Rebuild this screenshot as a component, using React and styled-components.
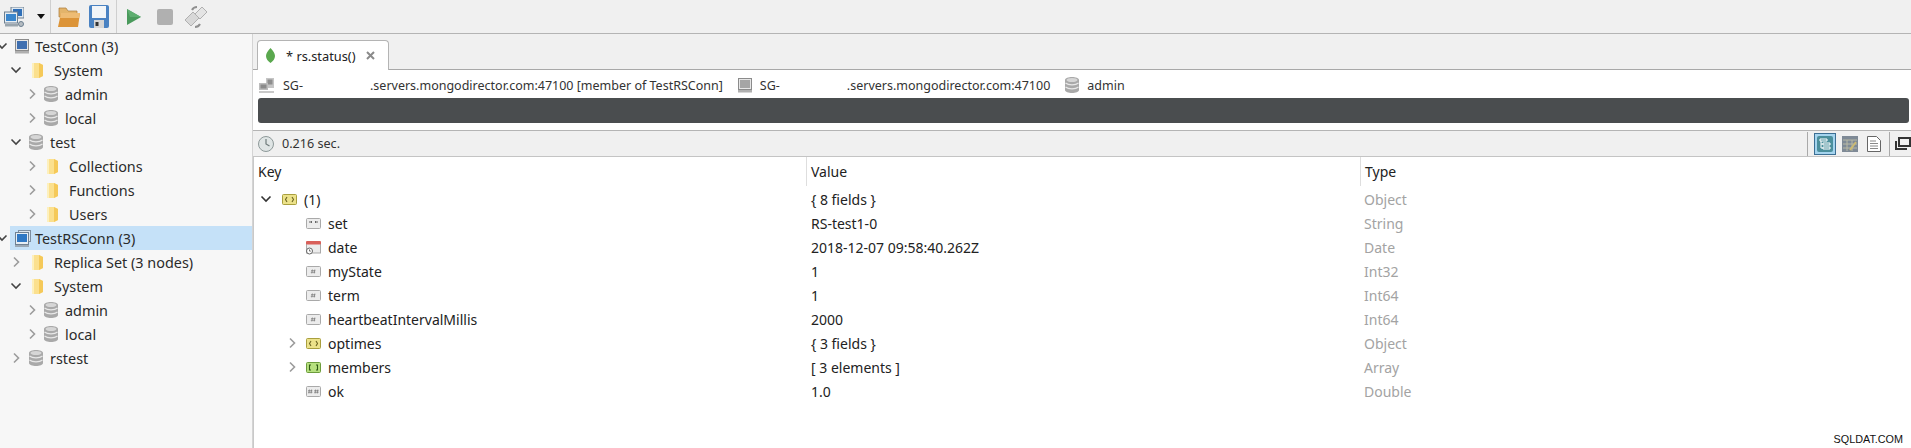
import React from "react";
import styled, { createGlobalStyle } from "styled-components";

const GlobalStyle = createGlobalStyle`
  html, body { margin: 0; padding: 0; background: #fff; }
  body { font-family: "Noto Sans", "Open Sans", sans-serif; color: #222; overflow: hidden; }
`;

const Page = styled.div`
  position: relative;
  width: 1911px;
  height: 448px;
  display: flex;
  flex-direction: column;
  overflow: hidden;
`;

const Toolbar = styled.div`
  height: 33px;
  flex: none;
  display: flex;
  align-items: center;
  background: #f0f0f0;
  border-bottom: 1px solid #b4b4b4;
`;

const ToolIcon = styled.svg`
  flex: none;
  display: block;
  margin-left: ${(p) => p.$left}px;
`;

const ToolSep = styled.div`
  flex: none;
  width: 1px;
  height: 33px;
  background: #cfcfcf;
  margin-left: ${(p) => p.$left}px;
`;

const Body = styled.div`
  flex: 1;
  display: flex;
  min-height: 0;
`;

const Sidebar = styled.div`
  width: 252px;
  flex: none;
  background: #f7f7f7;
  border-right: 1px solid #d4d4d4;
  overflow: hidden;
`;

const TreeRow = styled.div`
  height: 24px;
  display: flex;
  align-items: center;
  padding-left: ${(p) => p.$left}px;
  font-size: 14.4px;
  color: #2b2b2b;
  white-space: nowrap;
  background: ${(p) => (p.$selected ? "linear-gradient(90deg, transparent 10px, #c5e1f8 10px)" : "none")};
`;

const Arrow = styled.svg`
  flex: none;
  width: 12px;
  height: 12px;
  margin-left: ${(p) => p.$offset || 0}px;
  margin-right: ${(p) => p.$gap}px;
`;

const NodeIcon = styled.span`
  flex: none;
  box-sizing: border-box;
  display: flex;
  align-items: center;
  width: ${(p) => p.$width}px;
  padding-left: ${(p) => p.$pad || 0}px;
`;

const Main = styled.div`
  flex: 1;
  min-width: 0;
  display: flex;
  flex-direction: column;
`;

const TabBar = styled.div`
  height: 35px;
  flex: none;
  background: #f0f0f0;
  border-bottom: 1px solid #a8a8a8;
  display: flex;
  align-items: flex-end;
  padding-left: 4px;
`;

const Tab = styled.div`
  width: 132px;
  height: 30px;
  box-sizing: border-box;
  margin-bottom: -1px;
  background: #fff;
  border: 1px solid #b4b4b4;
  border-bottom: none;
  border-radius: 4px 4px 0 0;
  display: flex;
  align-items: center;
  padding-left: 8px;
  font-size: 12.8px;
  color: #222;
`;

const TabTitle = styled.span`
  margin-left: 11px;
`;

const TabClose = styled.svg`
  margin-left: 10px;
`;

const InfoBar = styled.div`
  height: 28px;
  flex: none;
  box-sizing: border-box;
  padding: 2px 0 0 6px;
  display: flex;
  align-items: center;
  font-size: 12.5px;
  color: #333;
  white-space: nowrap;
`;

const InfoItem = styled.span`
  display: flex;
  align-items: center;
  margin-left: ${(p) => p.$left || 0}px;
`;

const InfoText = styled.span`
  margin-left: ${(p) => p.$left}px;
`;

const QueryBar = styled.div`
  height: 25px;
  flex: none;
  margin: 0 2px 0 5px;
  background: #4a4d4f;
  border-radius: 3px;
`;

const StatusBar = styled.div`
  height: 25px;
  flex: none;
  margin-top: 7px;
  display: flex;
  align-items: center;
  padding-left: 5px;
  background: #f0f0f0;
  border-top: 1px solid #b4b4b4;
  border-bottom: 1px solid #c4c4c4;
  font-size: 12.6px;
  color: #333;
`;

const StatusTime = styled.span`
  margin-left: 8px;
  flex: 1;
`;

const ViewSep = styled.div`
  width: 1px;
  height: 24px;
  background: #a9a9a9;
`;

const ViewButton = styled.div`
  width: 20px;
  height: 20px;
  margin: 0 6px;
  background: #a5d4ee;
  border: 1px solid #3c6f94;
  display: flex;
  align-items: center;
  justify-content: center;
`;

const ViewIcon = styled.svg`
  display: block;
  margin-right: ${(p) => p.$right || 0}px;
  margin-left: ${(p) => p.$left || 0}px;
`;

const Table = styled.div`
  flex: 1;
  background: #fff;
  border-left: 1px solid #c9c9c9;
  font-size: 14px;
`;

const HeaderRow = styled.div`
  height: 30px;
  display: grid;
  grid-template-columns: 552px 554px 1fr;
  color: #222;
`;

const HeaderCell = styled.div`
  height: 29px;
  display: flex;
  align-items: center;
  padding-left: 4px;
  border-left: ${(p) => (p.$first ? "none" : "1px solid #dedede")};
`;

const DataRow = styled.div`
  height: 24px;
  display: grid;
  grid-template-columns: 552px 554px 1fr;
  align-items: center;
`;

const KeyCell = styled.div`
  display: flex;
  align-items: center;
  padding-left: ${(p) => p.$left}px;
`;

const KeyIcon = styled.svg`
  flex: none;
  margin-right: ${(p) => p.$gap}px;
`;

const ValueCell = styled.div`
  padding-left: 5px;
  color: #222;
`;

const TypeCell = styled.div`
  padding-left: 4px;
  color: #a3a3a3;
`;

const Watermark = styled.div`
  position: absolute;
  right: 8px;
  bottom: 3px;
  font-family: "Liberation Sans", sans-serif;
  font-size: 10.8px;
  color: #111;
`;

const Chevron = ({ open, dark, gap, offset }) => (
  <Arrow viewBox="0 0 12 12" $gap={gap} $offset={offset}>
    {open ? (
      <path d="M1.5 3.5l4.5 4.5 4.5-4.5" fill="none" stroke={dark ? "#333" : "#444"} strokeWidth="1.6" />
    ) : (
      <path d="M4 1.5l4.5 4.5-4.5 4.5" fill="none" stroke="#9c9c9c" strokeWidth="1.6" />
    )}
  </Arrow>
);

const Folder = () => (
  <svg width="13" height="17" viewBox="0 0 13 17">
    <path d="M1 1h7l4 2v11l-4 2H1z" fill="#fbe08e" />
    <path d="M8 1l4 2v11l-4 2z" fill="#f5c959" />
    <path d="M1 1h2v15H1z" fill="#fdf0bd" />
  </svg>
);

const Db = ({ size = 14 }) => (
  <svg width={size} height={size + 2} viewBox="0 0 14 16">
    <path d="M0 3c0-4 14-4 14 0v10c0 4-14 4-14 0z" fill="#a9a9a9" />
    <ellipse cx="7" cy="3" rx="5.5" ry="2" fill="#d6d6d6" />
    <path d="M0.5 6c3 2.6 10 2.6 13 0M0.5 10c3 2.6 10 2.6 13 0" fill="none" stroke="#e8e8e8" strokeWidth="1.2" />
  </svg>
);

const Server = ({ color = "#3f6fb0" }) => (
  <svg width="14" height="15" viewBox="0 0 14 15">
    <rect x="0.5" y="0.5" width="13" height="11" fill="#e6e6e6" stroke="#8b8b8b" />
    <rect x="2" y="2" width="10" height="8" fill={color} />
    <rect x="0" y="12" width="14" height="2.5" fill="#b0b0b0" />
  </svg>
);

const ReplicaServer = () => (
  <svg width="16" height="17" viewBox="0 0 16 17">
    <rect x="3.5" y="0.5" width="12" height="11" fill="#dbe6f0" stroke="#7d8ea0" />
    <rect x="0.5" y="2.5" width="13" height="12" fill="#e6eef5" stroke="#6f8193" />
    <rect x="2" y="4" width="10" height="8" fill="#2f78c4" />
    <rect x="0" y="15" width="14" height="2" fill="#9aa8b5" />
  </svg>
);

const InfoServers = () => (
  <svg width="15" height="15" viewBox="0 0 15 15">
    <rect x="7" y="0" width="8" height="10" fill="#c5c5c5" />
    <rect x="8.5" y="1.5" width="5" height="5" fill="#8e8e8e" />
    <rect x="0" y="5" width="9" height="7" fill="#bcbcbc" />
    <rect x="1.5" y="6.5" width="6" height="4" fill="#8a8a8a" />
    <rect x="0" y="13" width="15" height="2" fill="#c9c9c9" />
  </svg>
);

const KIND_COLORS = {
  string: ["#ececec", "#a9a9a9"],
  number: ["#ececec", "#a9a9a9"],
  object: ["#ece28a", "#a99f3e"],
  array: ["#b6e07f", "#6c9c3c"],
};

const TypeIcon = ({ kind, gap }) => {
  if (kind === "date") {
    return (
      <KeyIcon width="15" height="15" viewBox="0 0 15 15" $gap={gap}>
        <rect x="0.5" y="3" width="14" height="10" fill="#ececec" stroke="#a9a9a9" />
        <rect x="0" y="1" width="15" height="3.5" rx="1" fill="#d9605a" />
        <circle cx="3.5" cy="11" r="3" fill="#fff" stroke="#666" />
        <path d="M3.5 9.4v1.7h1.4" fill="none" stroke="#555" strokeWidth="0.8" />
      </KeyIcon>
    );
  }
  const base = kind === "double" ? "number" : kind;
  const [fill, line] = KIND_COLORS[base];
  return (
    <KeyIcon width="15" height="11" viewBox="0 0 15 11" $gap={gap}>
      <rect x="0.5" y="0.5" width="14" height="10" rx="1" fill={fill} stroke={line} />
      {kind === "string" && <path d="M4 3v2M5.5 3v2M9.5 3v2M11 3v2" stroke="#666" />}
      {kind === "number" && <path d="M6.4 3.5l-.6 4M8.8 3.5l-.6 4M5 4.7h4.4M4.8 6.3h4.4" stroke="#777" strokeWidth="0.7" />}
      {kind === "double" && (
        <path d="M3.4 3.5l-.5 4M5.6 3.5l-.5 4M2 4.7h4.4M2 6.3h4.4M9.6 3.5l-.5 4M11.8 3.5l-.5 4M8.2 4.7h4.4M8.2 6.3h4.4" stroke="#777" strokeWidth="0.7" />
      )}
      {kind === "object" && <path d="M5 3L3.5 5.5 5 8M10 3l1.5 2.5L10 8" fill="none" stroke="#6b6320" strokeWidth="1.1" />}
      {kind === "array" && <path d="M5 3H3.5v5H5M10 3h1.5v5H10" fill="none" stroke="#2f5a14" strokeWidth="1.1" />}
    </KeyIcon>
  );
};

const treeRows = [
  { left: 0, top: true, open: true, icon: <Server />, slot: 20, label: "TestConn (3)" },
  { left: 10, open: true, icon: <Folder />, slot: 26, pad: 3, label: "System" },
  { left: 26, icon: <Db />, slot: 21, label: "admin" },
  { left: 26, icon: <Db />, slot: 21, label: "local" },
  { left: 10, open: true, icon: <Db />, slot: 22, pad: 1, label: "test" },
  { left: 26, icon: <Folder />, slot: 25, pad: 2, label: "Collections" },
  { left: 26, icon: <Folder />, slot: 25, pad: 2, label: "Functions" },
  { left: 26, icon: <Folder />, slot: 25, pad: 2, label: "Users" },
  { left: 0, top: true, open: true, icon: <ReplicaServer />, slot: 20, selected: true, label: "TestRSConn (3)" },
  { left: 10, icon: <Folder />, slot: 26, pad: 3, label: "Replica Set (3 nodes)" },
  { left: 10, open: true, icon: <Folder />, slot: 26, pad: 3, label: "System" },
  { left: 26, icon: <Db />, slot: 21, label: "admin" },
  { left: 26, icon: <Db />, slot: 21, label: "local" },
  { left: 10, icon: <Db />, slot: 22, pad: 1, label: "rstest" },
];

const resultRows = [
  { key: "set", kind: "string", value: "RS-test1-0", type: "String" },
  { key: "date", kind: "date", value: "2018-12-07 09:58:40.262Z", type: "Date" },
  { key: "myState", kind: "number", value: "1", type: "Int32" },
  { key: "term", kind: "number", value: "1", type: "Int64" },
  { key: "heartbeatIntervalMillis", kind: "number", value: "2000", type: "Int64" },
  { key: "optimes", kind: "object", value: "{ 3 fields }", type: "Object", closed: true },
  { key: "members", kind: "array", value: "[ 3 elements ]", type: "Array", closed: true },
  { key: "ok", kind: "double", value: "1.0", type: "Double" },
];

function TopToolbar() {
  return (
    <Toolbar>
      <ToolIcon $left={4} width="20" height="20" viewBox="0 0 20 20">
        <rect x="7" y="0" width="13" height="11" fill="#dfe8f0" stroke="#6c7f90" />
        <rect x="9" y="2" width="9" height="7" fill="#2f6fb8" />
        <rect x="0.5" y="5" width="13" height="11" fill="#e6edf3" stroke="#6c7f90" />
        <rect x="2" y="7" width="10" height="7" fill="#3a86cc" />
        <rect x="1" y="17" width="13" height="2.5" fill="#9aa5ad" />
        <circle cx="17" cy="17" r="2.5" fill="#b5bcc2" stroke="#6c7f90" />
      </ToolIcon>
      <ToolIcon $left={13} width="8" height="5" viewBox="0 0 8 5">
        <path d="M0 0h8L4 5z" fill="#111" />
      </ToolIcon>
      <ToolSep $left={5} />
      <ToolIcon $left={6} width="23" height="23" viewBox="0 0 23 23">
        <path d="M2 3h7l2 3h9v6H2z" fill="#e3b46a" stroke="#a97a38" strokeWidth="0.7" />
        <path d="M4 8h19l-2 14H1z" fill="#dc9438" />
        <path d="M4 8h19l-1 5H3z" fill="#eebc74" />
      </ToolIcon>
      <ToolIcon $left={9} width="20" height="23" viewBox="0 0 20 23">
        <rect x="0" y="0" width="20" height="23" rx="2" fill="#4a82c2" />
        <rect x="3" y="1" width="14" height="12" fill="#f2f5f8" />
        <rect x="5" y="15" width="10" height="8" fill="#d6d6d6" />
        <rect x="6.5" y="17" width="3" height="4" fill="#333" />
      </ToolIcon>
      <ToolSep $left={7} />
      <ToolIcon $left={10} width="14" height="16" viewBox="0 0 14 16">
        <path d="M0 0l14 8-14 8z" fill="#4a9a5c" />
        <path d="M0 0l14 8H3z" fill="#5eae70" />
      </ToolIcon>
      <ToolIcon $left={16} width="16" height="16" viewBox="0 0 16 16">
        <rect width="16" height="16" rx="2" fill="#b0b0b0" />
      </ToolIcon>
      <ToolIcon $left={11} width="24" height="24" viewBox="0 0 24 24">
        <path d="M1 15l8-8 6 6-8 8z" fill="#d8d8d8" stroke="#b0b0b0" />
        <path d="M11 9l7-7 5 5-7 7z" fill="#e4e4e4" stroke="#b0b0b0" />
        <path d="M8 5c1-2 3-3 5-3M16 19c-1 2-3 3-5 3" fill="none" stroke="#8f8f8f" strokeWidth="2" />
      </ToolIcon>
    </Toolbar>
  );
}

function ConnectionTree() {
  return (
    <Sidebar>
      {treeRows.map((row, index) => (
        <TreeRow key={index} $left={row.left} $selected={row.selected}>
          <Chevron open={row.open} gap={row.top ? 7 : 6} offset={row.top ? -4 : 0} />
          <NodeIcon $width={row.slot} $pad={row.pad}>
            {row.icon}
          </NodeIcon>
          <span>{row.label}</span>
        </TreeRow>
      ))}
    </Sidebar>
  );
}

function ViewToggles() {
  return (
    <>
      <ViewSep />
      <ViewButton>
        <svg width="16" height="16" viewBox="0 0 16 16">
          <rect width="16" height="16" rx="2" fill="#4b8f9c" />
          <path d="M3 3h7v2H3zM6 7h7v2H6zM6 11h7v2H6z" fill="none" stroke="#fff" />
          <path d="M4 5v7h2M4 8h2" fill="none" stroke="#fff" />
        </svg>
      </ViewButton>
      <ViewIcon width="16" height="16" viewBox="0 0 16 16" $right={9}>
        <rect width="16" height="16" fill="#7f8a96" />
        <path d="M1 4h14M1 8h14M1 12h14M5 4v11M10 4v11" stroke="#b9b9a5" />
        <path d="M8 14l6-8" stroke="#cdbb73" strokeWidth="2" />
      </ViewIcon>
      <ViewIcon width="14" height="16" viewBox="0 0 14 16" $right={8}>
        <path d="M.5.5h9l4 4v11H.5z" fill="#fff" stroke="#666" />
        <path d="M3 5h6M3 7.5h8M3 10h8M3 12.5h8" stroke="#888" />
      </ViewIcon>
      <ViewSep />
      <ViewIcon width="16" height="13" viewBox="0 0 16 13" $left={5}>
        <path d="M4 1h11v8H4z" fill="none" stroke="#333" strokeWidth="2" />
        <path d="M1 4v8h11" fill="none" stroke="#333" strokeWidth="2" />
      </ViewIcon>
    </>
  );
}

function ResultTable() {
  return (
    <Table>
      <HeaderRow>
        <HeaderCell $first>Key</HeaderCell>
        <HeaderCell>Value</HeaderCell>
        <HeaderCell>Type</HeaderCell>
      </HeaderRow>
      <DataRow>
        <KeyCell $left={6}>
          <Chevron open dark gap={10} />
          <TypeIcon kind="object" gap={7} />
          (1)
        </KeyCell>
        <ValueCell>{"{ 8 fields }"}</ValueCell>
        <TypeCell>Object</TypeCell>
      </DataRow>
      {resultRows.map((row) => (
        <DataRow key={row.key}>
          <KeyCell $left={row.closed ? 32 : 52}>
            {row.closed && <Chevron gap={8} />}
            <TypeIcon kind={row.kind} gap={7} />
            {row.key}
          </KeyCell>
          <ValueCell>{row.value}</ValueCell>
          <TypeCell>{row.type}</TypeCell>
        </DataRow>
      ))}
    </Table>
  );
}

export default function App() {
  return (
    <Page>
      <GlobalStyle />
      <TopToolbar />
      <Body>
        <ConnectionTree />
        <Main>
          <TabBar>
            <Tab>
              <svg width="9" height="15" viewBox="0 0 9 15">
                <path d="M4.5 0C7 3 9 5 9 8c0 3-2 5-4.5 7C2 13 0 11 0 8c0-3 2-5 4.5-8z" fill="#5aa84e" />
              </svg>
              <TabTitle>* rs.status()</TabTitle>
              <TabClose width="9" height="9" viewBox="0 0 9 9">
                <path d="M1 1l7 7M8 1L1 8" stroke="#8a8a8a" strokeWidth="2" />
              </TabClose>
            </Tab>
          </TabBar>
          <InfoBar>
            <InfoItem>
              <InfoServers />
              <InfoText $left={9}>SG-</InfoText>
              <InfoText $left={67}>.servers.mongodirector.com:47100 [member of TestRSConn]</InfoText>
            </InfoItem>
            <InfoItem $left={15}>
              <Server color="#a5a5a5" />
              <InfoText $left={8}>SG-</InfoText>
              <InfoText $left={67}>.servers.mongodirector.com:47100</InfoText>
            </InfoItem>
            <InfoItem $left={15}>
              <Db />
              <InfoText $left={8}>admin</InfoText>
            </InfoItem>
          </InfoBar>
          <QueryBar />
          <StatusBar>
            <svg width="16" height="16" viewBox="0 0 16 16">
              <circle cx="8" cy="8" r="7.5" fill="#dfe5e5" stroke="#8d9999" />
              <path d="M8 3v5l3.5 2" fill="none" stroke="#6f7b7b" strokeWidth="1.2" />
            </svg>
            <StatusTime>0.216 sec.</StatusTime>
            <ViewToggles />
          </StatusBar>
          <ResultTable />
        </Main>
      </Body>
      <Watermark>SQLDAT.COM</Watermark>
    </Page>
  );
}
